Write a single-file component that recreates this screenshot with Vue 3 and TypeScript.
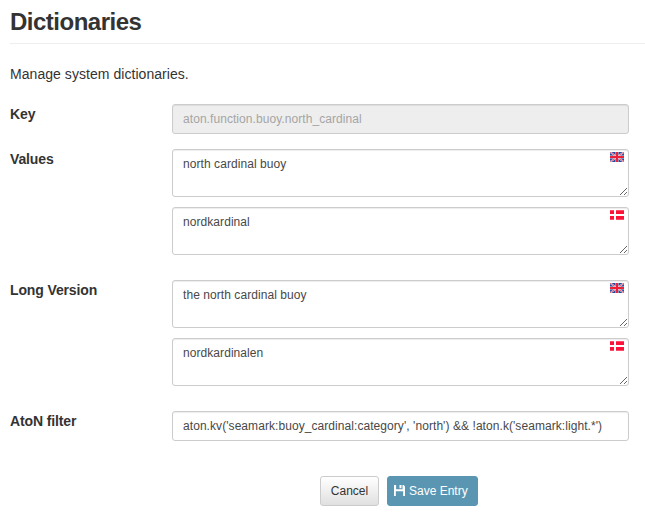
<script setup lang="ts">
import { reactive } from 'vue'

interface Translation {
  lang: 'en' | 'da'
  text: string
}

interface Group {
  label: string
  entries: Translation[]
}

const entry = reactive({
  key: 'aton.function.buoy.north_cardinal',
  filter: "aton.kv('seamark:buoy_cardinal:category', 'north') && !aton.k('seamark:light.*')",
})

const groups = reactive<Group[]>([
  {
    label: 'Values',
    entries: [
      { lang: 'en', text: 'north cardinal buoy' },
      { lang: 'da', text: 'nordkardinal' },
    ],
  },
  {
    label: 'Long Version',
    entries: [
      { lang: 'en', text: 'the north cardinal buoy' },
      { lang: 'da', text: 'nordkardinalen' },
    ],
  },
])
</script>

<template>
  <main class="page">
    <h1 class="title">Dictionaries</h1>
    <p class="intro">Manage system dictionaries.</p>

    <form class="form" @submit.prevent>
      <div class="row">
        <label class="label">Key</label>
        <input class="control" type="text" :value="entry.key" disabled />
      </div>

      <div v-for="group in groups" :key="group.label" class="row">
        <label class="label">{{ group.label }}</label>
        <div class="stack">
          <div v-for="item in group.entries" :key="item.lang" class="localized">
            <textarea v-model="item.text" class="control area" spellcheck="false"></textarea>
            <svg v-if="item.lang === 'en'" class="flag" viewBox="0 0 14 10">
              <rect width="14" height="10" fill="#1f4fa3" />
              <path d="M0 0L14 10M14 0L0 10" stroke="#f3dfe5" stroke-width="1.7" />
              <path d="M0 0L14 10M14 0L0 10" stroke="#e0405a" stroke-width=".8" />
              <path d="M7 0V10M0 5H14" stroke="#f0cfd8" stroke-width="3" />
              <path d="M7 0V10M0 5H14" stroke="#ec2038" stroke-width="2" />
            </svg>
            <svg v-else class="flag" viewBox="0 0 14 10">
              <rect width="14" height="10" fill="#fff" />
              <path d="M0 .3H4V4H0zM6 .3H14V4H6zM0 6H4V9.7H0zM6 6H14V9.7H6z" fill="#fd1238" />
            </svg>
          </div>
        </div>
      </div>

      <div class="row">
        <label class="label">AtoN filter</label>
        <input v-model="entry.filter" class="control" type="text" spellcheck="false" />
      </div>

      <div class="actions">
        <button class="btn cancel" type="button">Cancel</button>
        <button class="btn save" type="submit">
          <svg class="disk" viewBox="0 0 12 12">
            <path d="M0 0H2.3V4.6H9.3V0H10.5L12 1.5V12H10V6.8H2V12H0zM6 0H8.2V3.6H6z" fill="#fff" />
          </svg>
          <span>Save Entry</span>
        </button>
      </div>
    </form>
  </main>
</template>

<style>
body {
  margin: 0;
  background: #fff;
}
</style>

<style scoped>
.page {
  box-sizing: border-box;
  width: 645px;
  height: 514px;
  padding-left: 10px;
  overflow: hidden;
  color: #333;
  font-family: "Liberation Sans", Arial, sans-serif;
  font-size: 14px;
  line-height: 20px;
}

.title {
  box-sizing: border-box;
  height: 44px;
  margin: 0;
  padding-top: 9px;
  border-bottom: 1px solid #eee;
  font-size: 24px;
  font-weight: 700;
  letter-spacing: -0.5px;
  line-height: 26px;
}

.intro {
  margin: 20px 0;
  letter-spacing: 0.05px;
}

.form {
  display: flex;
  flex-direction: column;
  gap: 15px;
}

.row {
  display: grid;
  grid-template-columns: 162px 457px;
  align-items: start;
}

.label {
  font-weight: 700;
  letter-spacing: -0.13px;
}

.stack {
  display: flex;
  flex-direction: column;
  gap: 10px;
  padding-bottom: 10px;
}

.localized {
  position: relative;
  height: 48px;
}

.control {
  display: block;
  box-sizing: border-box;
  width: 100%;
  height: 30px;
  margin: 0;
  padding: 5px 10px;
  border: 1px solid #ccc;
  border-radius: 3px;
  outline: 0;
  background: #fff;
  box-shadow: inset 0 1px 1px rgba(0, 0, 0, 0.075);
  color: #484848;
  font-family: inherit;
  font-size: 12px;
  letter-spacing: 0.065px;
  line-height: 18px;
}

.control:disabled {
  background: #eee;
  color: #a5a5a5;
}

.area {
  height: 48px;
  overflow: hidden;
  resize: vertical;
}

.flag {
  position: absolute;
  top: 3px;
  right: 5px;
  width: 14px;
  height: 10px;
}

.actions {
  display: flex;
  gap: 8px;
  margin-top: 20px;
  padding-left: 310px;
}

.btn {
  display: flex;
  box-sizing: border-box;
  align-items: center;
  justify-content: center;
  height: 30px;
  padding: 0;
  border: 1px solid #ccc;
  border-radius: 3px;
  font-family: inherit;
  font-size: 12px;
  line-height: 18px;
  white-space: nowrap;
}

.cancel {
  width: 59px;
  background: linear-gradient(#fff, #e0e0e0);
  color: #333;
}

.save {
  gap: 4px;
  justify-content: flex-start;
  width: 91px;
  padding-left: 6px;
  border-color: #5a96b2;
  background: #5a96b2;
  color: #fff;
}

.disk {
  width: 11px;
  height: 11px;
  margin-bottom: 2px;
}
</style>
